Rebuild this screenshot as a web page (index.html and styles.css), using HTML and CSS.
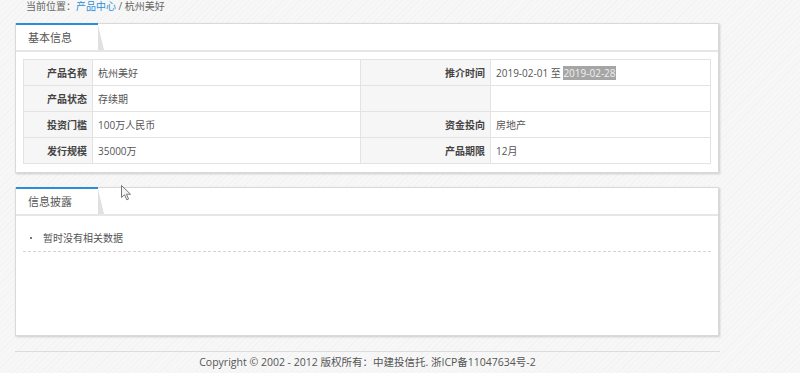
FILE: index.html
```html
<!DOCTYPE html>
<html lang="zh-CN">
<head>
    <meta charset="UTF-8">
    <meta name="viewport" content="width=device-width, initial-scale=1.0">
    <title>产品详情 - 杭州美好</title>
    <link rel="stylesheet" href="styles.css">
</head>
<body>
    <div class="page">
        <div class="breadcrumb">当前位置：<a href="#">产品中心</a> / 杭州美好</div>

        <div class="panel">
            <div class="panel-head"><span class="tab">基本信息</span></div>
            <div class="panel-body">
                <table class="info">
                    <tr>
                        <th class="c1">产品名称</th>
                        <td class="c2">杭州美好</td>
                        <th class="c3">推介时间</th>
                        <td>2019-02-01 至 <span class="selected">2019-02-28</span></td>
                    </tr>
                    <tr>
                        <th>产品状态</th>
                        <td>存续期</td>
                        <th></th>
                        <td></td>
                    </tr>
                    <tr>
                        <th>投资门槛</th>
                        <td>100万人民币</td>
                        <th>资金投向</th>
                        <td>房地产</td>
                    </tr>
                    <tr>
                        <th>发行规模</th>
                        <td>35000万</td>
                        <th>产品期限</th>
                        <td>12月</td>
                    </tr>
                </table>
            </div>
        </div>

        <div class="panel panel-news">
            <div class="panel-head"><span class="tab">信息披露</span></div>
            <div class="panel-body">
                <ul class="news">
                    <li>暂时没有相关数据</li>
                </ul>
            </div>
        </div>

        <div class="footer">Copyright © 2002 - 2012 版权所有：中建投信托. 浙ICP备11047634号-2</div>
    </div>

    <svg class="cursor" width="11" height="16" viewBox="0 0 11 16">
        <path d="M0.5 0.5 L0.5 12.5 L3.5 9.8 L5.8 14.8 L7.6 14 L5.4 9.2 L9.5 9.2 Z" fill="#f4f4f4" stroke="#777" stroke-width="1"/>
    </svg>
</body>
</html>
```

FILE: styles.css
```css
body {
    margin: 0;
    font-family: "Open Sans", "Noto Sans CJK SC", sans-serif;
    font-size: 10px;
    color: #555;
    background-color: #f5f5f5;
    background-image: repeating-linear-gradient(135deg, #f3f3f3 0, #f3f3f3 1px, #f7f7f7 1px, #f7f7f7 4px);
    overflow: hidden;
}
.page {
    width: 705px;
    margin-left: 15px;
}
.breadcrumb {
    height: 12px;
    line-height: 12px;
    margin-bottom: 11px;
    padding-left: 11px;
    color: #666;
}
.breadcrumb a {
    color: #2a8fd8;
    text-decoration: none;
}
.panel {
    box-sizing: border-box;
    width: 704px;
    background: #fff;
    border: 1px solid #d9d9d9;
    box-shadow: 1px 1px 2px rgba(0,0,0,0.18);
}
.panel-news {
    margin-top: 14px;
}
.panel-head {
    height: 26px;
    border-bottom: 2px solid #e6e6e6;
}
.tab {
    position: relative;
    display: inline-block;
    width: 70px;
    height: 26px;
    margin-top: -1px;
    padding-left: 12px;
    border-top: 2px solid #2a8fd8;
    line-height: 25px;
    font-size: 11px;
    color: #555;
}
.tab::after {
    content: "";
    position: absolute;
    right: -6px;
    top: 0;
    width: 0;
    height: 0;
    border-left: 6px solid #e0e0e0;
    border-top: 25px solid transparent;
}
.panel-body {
    padding: 7px 7px 8px;
}
.panel-news .panel-body {
    min-height: 97px;
    padding-top: 14px;
}
.info {
    width: 688px;
    border-collapse: collapse;
}
.info th,
.info td {
    height: 25px;
    border: 1px solid #e3e3e3;
    padding: 0 5px;
}
.info th {
    background: #f6f6f6;
    text-align: right;
    color: #444;
}
.info td {
    text-align: left;
}
.c1 { width: 58px; }
.c2 { width: 257px; }
.c3 { width: 119px; }
.selected {
    background: #a5a5a5;
    color: #f0f0f0;
}
.news {
    list-style: none;
    margin: 0;
    padding: 0;
}
.news li {
    position: relative;
    line-height: 16px;
    padding: 0 0 5px 20px;
    border-bottom: 1px dashed #d4d4d4;
}
.news li::before {
    content: "";
    position: absolute;
    left: 7px;
    top: 7px;
    width: 2px;
    height: 2px;
    background: #777;
}
.footer {
    margin-top: 15px;
    border-top: 1px solid #dcdcdc;
    padding: 0;
    line-height: 20px;
    text-align: center;
    font-size: 10.5px;
    color: #555;
}
.cursor {
    position: absolute;
    left: 121px;
    top: 185px;
}
```
